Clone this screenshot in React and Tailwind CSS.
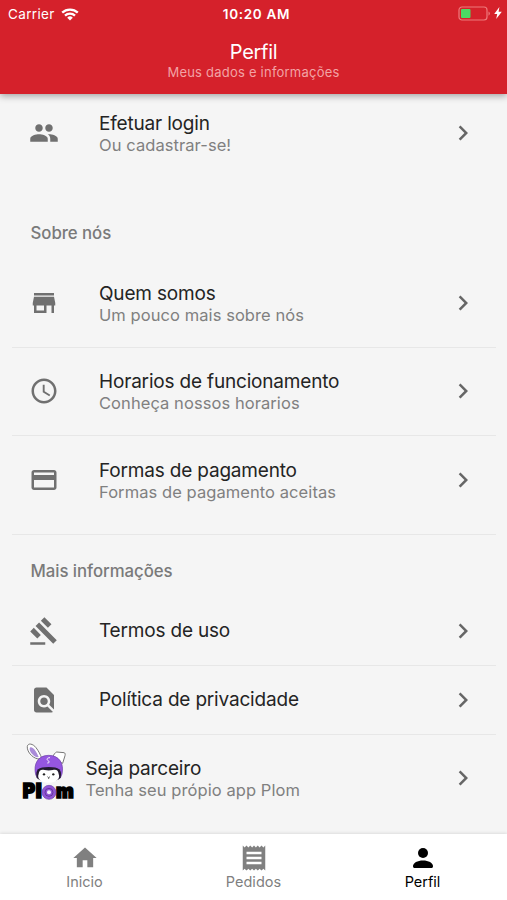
import React, { useState } from "react";
import {
  MdAccessTime,
  MdChevronRight,
  MdCreditCard,
  MdFindInPage,
  MdGavel,
  MdHome,
  MdPeople,
  MdReceipt,
  MdStore,
} from "react-icons/md";

const PersonIcon = ({ size }) => (
  <svg width={size} height={size} viewBox="0 0 24 24" fill="currentColor">
    <circle cx="12" cy="8" r="4" />
    <path d="M12 14c-4.4 0-8 1.9-8 4.6 0 .9.5 1.4 1.4 1.4h13.2c.9 0 1.4-.5 1.4-1.4 0-2.7-3.6-4.6-8-4.6z" />
  </svg>
);

const aboutItems = [
  { icon: MdStore, title: "Quem somos", subtitle: "Um pouco mais sobre nós" },
  { icon: MdAccessTime, title: "Horarios de funcionamento", subtitle: "Conheça nossos horarios" },
  { icon: MdCreditCard, title: "Formas de pagamento", subtitle: "Formas de pagamento aceitas" },
];

const infoItems = [
  { icon: MdGavel, title: "Termos de uso" },
  { icon: MdFindInPage, title: "Política de privacidade" },
];

const tabs = [
  { label: "Inicio", icon: MdHome, size: 28 },
  { label: "Pedidos", icon: MdReceipt, size: 30 },
  { label: "Perfil", icon: PersonIcon, size: 30 },
];

const StatusBar = () => (
  <div className="grid h-7 grid-cols-3 items-center pl-2 pr-[5px] text-[13.5px] leading-[26px]">
    <div className="flex items-center gap-[6px]">
      <span className="tracking-[0.35px]">Carrier</span>
      <svg width="18" height="13" viewBox="0 0 18 13" fill="none" stroke="white" strokeWidth="2.3">
        <path d="M1.2 4.7a11.2 11.2 0 0 1 15.6 0" />
        <path d="M4 7.7a7.2 7.2 0 0 1 10 0" />
        <path d="M9 12.6 6.2 9.7a4 4 0 0 1 5.6 0z" fill="white" stroke="none" />
      </svg>
    </div>
    <span className="pl-[3px] text-center font-semibold tracking-[0.7px]">10:20 AM</span>
    <div className="flex items-center justify-end gap-[3px] pb-[2px]">
      <svg width="33" height="15" viewBox="0 0 33 15">
        <rect x="1" y="1" width="28" height="13" rx="3" fill="none" stroke="#ee7a7c" strokeWidth="1.2" />
        <rect x="3" y="3" width="9.5" height="9" rx="1" fill="#4cd964" />
        <path d="M30.5 5.5a2.3 2.3 0 0 1 0 4.2z" fill="#ee7a7c" />
      </svg>
      <svg width="8" height="12" viewBox="0 0 8 12">
        <path d="M5.4 0 .2 6.9h3L2.2 12l5.6-7.2H4.6z" fill="white" />
      </svg>
    </div>
  </div>
);

const PlomLogo = () => (
  <svg width="55" height="60" viewBox="30 20 165 180">
    {/* ears */}
    <path d="M84 71C65 67 50 47 52 33c2-11 17-8 26 4 8 10 13 21 17 31z" fill="#fff" stroke="#777" strokeWidth="3" />
    <path d="M80 66C67 60 58 48 59 39c1-6 9-4 15 4 6 8 9 15 12 22z" fill="#a98bd8" />
    <path d="M129 65c2-8 6-13 11-15l22 2c4 1 4 5 3 9l-7 23-12-5-5-6z" fill="#fff" stroke="#777" strokeWidth="3" />
    {/* helmet and face */}
    <path d="M77 118c-8-33 8-58 39-58 31 0 47 24 40 56l-5 12H82z" fill="#9556e0" stroke="#6a41a5" strokeWidth="2" />
    <path d="M80 126c-5-23 5-31 36-31s41 8 36 31c-5 16-67 16-72 0z" fill="#231a30" />
    <path d="M86 116c1-12 8-15 18-12 7 2 17 2 24 0 10-3 17 0 18 12 6 14-7 26-30 26s-36-12-30-26z" fill="#fff" />
    <circle cx="102" cy="117" r="3.5" fill="#222" />
    <circle cx="130" cy="117" r="3.5" fill="#222" />
    <path d="m112 124 4 3 4-3m-4 3v4" stroke="#222" strokeWidth="2" fill="none" />
    <path d="M120 67c-8 0-11 4-7 8 6 4 7 7-1 8" stroke="#fff" strokeWidth="3" fill="none" />
    <g className="font-['Inter',sans-serif] text-[60px] font-black" fill="#000" stroke="#000" strokeWidth="5">
      <text x="38" y="187" textLength="37" lengthAdjust="spacingAndGlyphs">P</text>
      <text x="77" y="187" textLength="18" lengthAdjust="spacingAndGlyphs">l</text>
      <text x="138" y="187" textLength="53" lengthAdjust="spacingAndGlyphs">m</text>
    </g>
    <circle cx="117" cy="171" r="21" fill="#9155d6" stroke="#6b3fa8" strokeWidth="2" />
    <circle cx="117" cy="171" r="12" fill="none" stroke="#4d2c82" strokeWidth="2" />
    <circle cx="117" cy="171" r="6" fill="#f5f0ff" />
  </svg>
);

const ItemText = ({ title, subtitle }) => (
  <div className={subtitle ? "flex-1 pt-px" : "flex-1"}>
    <div className="text-[19px] leading-[24px] tracking-[-0.18px] text-[#242424]">{title}</div>
    {subtitle && (
      <div className="-mt-px text-[16.5px] leading-[20px] tracking-[0.07px] text-[#808080]">{subtitle}</div>
    )}
  </div>
);

const ListItem = ({ icon: Icon, title, subtitle, className }) => (
  <div className={`flex items-center pl-[17px] pr-[18px] ${className}`}>
    <Icon size={30} className="mr-[40px] shrink-0 text-[#707070]" />
    <ItemText title={title} subtitle={subtitle} />
    <MdChevronRight size={30} className="shrink-0 text-[#666]" />
  </div>
);

const App = () => {
  const [activeTab, setActiveTab] = useState("Perfil");

  return (
    <div className="flex h-[900px] w-[507px] flex-col overflow-hidden bg-[#f5f5f5] font-['Inter',sans-serif]">
      <header className="z-10 h-[94px] shrink-0 bg-[#d5212b] text-white shadow-[0_2px_7px_rgba(0,0,0,0.35)]">
        <StatusBar />
        <div className="pt-[11px] text-center">
          <h1 className="text-[20px] leading-[26px] tracking-[-0.3px]">Perfil</h1>
          <p className="text-[13px] leading-[15px] tracking-[0.22px] text-[#f2a3a5]">Meus dados e informações</p>
        </div>
      </header>

      <main className="flex-1 pl-3 pr-[11px]">
        <ListItem icon={MdPeople} title="Efetuar login" subtitle="Ou cadastrar-se!" className="h-[78px]" />

        <h2 className="mt-[49px] pl-[18.5px] text-[16.8px] font-medium leading-[24px] tracking-[-0.05px] text-[#7a7a7a]">
          Sobre nós
        </h2>
        <div className="mt-[14px] divide-y divide-[#e7e7e7] border-b border-[#e7e7e7] pb-[9px]">
          {aboutItems.map((item) => (
            <ListItem key={item.title} {...item} className="h-[88.5px]" />
          ))}
        </div>

        <h2 className="mt-[24px] pl-[18.5px] text-[16.8px] font-medium leading-[24px] tracking-[-0.05px] text-[#7a7a7a]">
          Mais informações
        </h2>
        <div className="mt-[14px]">
          {infoItems.map((item) => (
            <ListItem key={item.title} {...item} className="h-[69px] border-b border-[#e7e7e7]" />
          ))}
        </div>
        <div className="flex h-[86px] items-center pl-2 pr-[18px]">
          <div className="mr-[10.5px] shrink-0 pb-[11px]">
            <PlomLogo />
          </div>
          <ItemText title="Seja parceiro" subtitle="Tenha seu própio app Plom" />
          <MdChevronRight size={30} className="shrink-0 text-[#666]" />
        </div>
      </main>

      <nav className="grid h-[66px] shrink-0 grid-cols-3 bg-white shadow-[0_-1px_3px_rgba(0,0,0,0.1)]">
        {tabs.map(({ label, icon: Icon, size }) => (
          <button
            key={label}
            onClick={() => setActiveTab(label)}
            className={`flex flex-col items-center pt-[9px] ${activeTab === label ? "text-black" : "text-[#808080]"}`}
          >
            <span className="flex h-[30px] items-center">
              <Icon size={size} />
            </span>
            <span className="text-[14.5px] leading-[18px]">{label}</span>
          </button>
        ))}
      </nav>
    </div>
  );
};

export default App;
